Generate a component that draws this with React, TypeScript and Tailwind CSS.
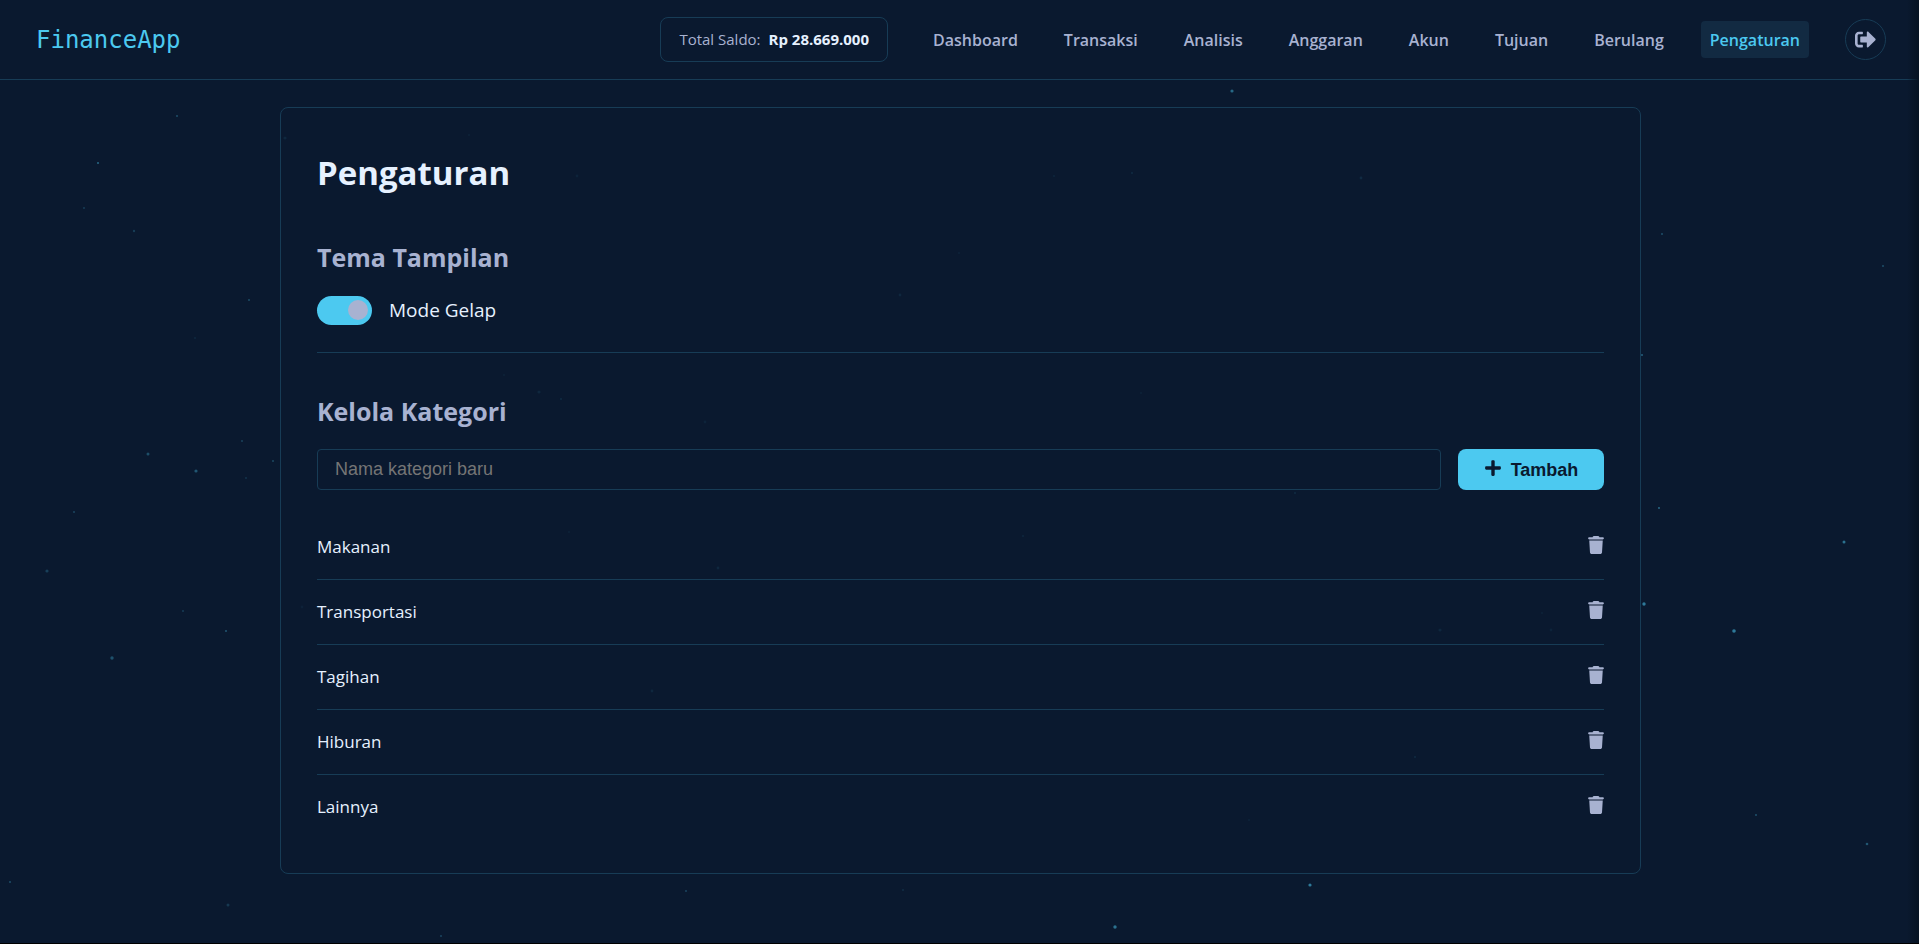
import React, { useState } from "react";
import { FaTrash } from "react-icons/fa6";
import { FaPlus, FaSignOutAlt } from "react-icons/fa";

const LINKS = ["Dashboard", "Transaksi", "Analisis", "Anggaran", "Akun", "Tujuan", "Berulang", "Pengaturan"];
const CATEGORIES = ["Makanan", "Transportasi", "Tagihan", "Hiburan", "Lainnya"];

// x, y, radius, opacity
const STARS: [number, number, number, number][] = [
  [177, 116, 1, 0.3], [98, 163, 1, 0.45], [84, 208, 0.8, 0.35], [134, 231, 1.2, 0.2], [249, 300, 0.8, 0.5],
  [242, 441, 0.8, 0.4], [273, 461, 0.8, 0.45], [148, 454, 1.5, 0.3], [196, 471, 1.6, 0.35], [246, 478, 0.7, 0.3],
  [74, 512, 1, 0.25], [47, 571, 1.6, 0.22], [183, 611, 0.8, 0.35], [226, 631, 1, 0.35], [112, 658, 1.7, 0.32],
  [10, 882, 1, 0.3], [228, 905, 1.5, 0.18], [195, 338, 0.8, 0.15], [1232, 91, 1.6, 0.45], [1662, 234, 1, 0.3],
  [1883, 266, 1, 0.3], [1642, 355, 1, 0.4], [1659, 508, 0.9, 0.5], [1844, 542, 1.5, 0.5], [1644, 604, 1.7, 0.55],
  [1734, 631, 1.8, 0.55], [1756, 815, 0.9, 0.35], [1867, 844, 1.3, 0.35], [1310, 885, 1.6, 0.55], [1115, 927, 1.7, 0.5],
  [686, 891, 1, 0.25], [903, 890, 1, 0.12], [441, 936, 1, 0.25],
  [285, 138, 1.6, 0.08], [469, 135, 1, 0.06], [577, 176, 1.4, 0.06], [1361, 178, 1.4, 0.1], [504, 375, 1, 0.06],
  [539, 392, 1.6, 0.08], [561, 399, 1.2, 0.08], [1440, 630, 1.6, 0.08], [1542, 613, 1, 0.06], [1551, 630, 1.4, 0.06],
  [652, 691, 1.4, 0.08], [302, 607, 1.4, 0.05], [569, 532, 1, 0.06], [1054, 176, 1.2, 0.06], [1132, 173, 1.2, 0.08],
  [959, 253, 1.2, 0.05], [900, 295, 1.4, 0.08], [1141, 393, 1, 0.06], [705, 422, 1.4, 0.06], [1023, 536, 1, 0.08],
  [718, 568, 1.4, 0.08], [1295, 493, 1.2, 0.08], [1415, 757, 1.2, 0.08], [1249, 820, 1.2, 0.05],
];

export default function App() {
  const [dark, setDark] = useState(true);
  return (
    <div className="relative isolate flex min-h-screen flex-col border-b border-black bg-[#0a192f] font-['Open_Sans','Noto_Sans',sans-serif] text-[#e6f1ff]">
      <svg aria-hidden="true" className="pointer-events-none absolute inset-0 -z-10 h-full w-full" fill="#4cc9f0">
        {STARS.map(([x, y, r, o]) => (
          <circle key={`${x}-${y}`} cx={x} cy={y} r={r} opacity={o} />
        ))}
      </svg>
      <div aria-hidden="true" className="pointer-events-none absolute inset-y-0 right-0 w-3 bg-linear-to-r from-transparent to-[#061322]" />

      <header className="flex h-20 items-center justify-between border-b border-[#173c56] pr-[33px] pl-9">
        <a href="#" className="font-['DejaVu_Sans_Mono',monospace] text-2xl text-[#4cc9f0]">FinanceApp</a>
        <div className="flex items-center gap-9">
          <div className="flex h-[45px] items-center gap-2 rounded-lg border border-[#173c56] px-[18px] text-[15px]">
            <span className="text-[#a8b2d1]">Total Saldo:</span>
            <strong className="font-bold">Rp 28.669.000</strong>
          </div>
          <nav className="flex items-center gap-7">
            {LINKS.map((label) => (
              <a
                key={label}
                href="#"
                className={
                  label === "Pengaturan"
                    ? "flex h-[37px] items-center rounded bg-[#122a42] px-[9px] font-semibold text-[#4cc9f0]"
                    : "flex h-[37px] items-center rounded px-[9px] font-semibold text-[#a8b2d1]"
                }
              >
                {label}
              </a>
            ))}
          </nav>
          <button type="button" aria-label="Keluar" className="flex size-[41px] items-center justify-center rounded-full border border-[#173c56] text-[#a8b2d1]">
            <FaSignOutAlt size={21} />
          </button>
        </div>
      </header>

      <div className="pt-[27px] pl-0.5">
        <main className="mx-auto w-full max-w-[1361px] rounded-lg border border-[#173c56] px-9 pt-10 pb-[34px]">
          <h1 className="text-[33px] leading-[50px] font-bold">Pengaturan</h1>

          <section className="mt-[37px] border-b border-[#173c56] pb-7">
            <h2 className="text-[25px] leading-[44px] font-bold text-[#a8b2d1]">Tema Tampilan</h2>
            <label className="mt-[17px] flex h-7 cursor-pointer items-center gap-[17px] text-[19px]">
              <span className="relative flex h-[29px] w-[55px] items-center">
                <input
                  type="checkbox"
                  checked={dark}
                  onChange={(e) => setDark(e.target.checked)}
                  className="peer h-full w-full cursor-pointer appearance-none rounded-full bg-[#173c56] checked:bg-[#4cc9f0]"
                />
                <span className="pointer-events-none absolute left-1 size-5 rounded-full bg-[#a8b2d1] peer-checked:left-[31px]" />
              </span>
              Mode Gelap
            </label>
          </section>

          <section className="mt-9">
            <h2 className="text-[25px] leading-[44px] font-bold text-[#a8b2d1]">Kelola Kategori</h2>
            <form className="mt-4 flex gap-[17px]" onSubmit={(e) => e.preventDefault()}>
              <input
                type="text"
                aria-label="Nama kategori baru"
                placeholder="Nama kategori baru"
                className="h-[41px] min-w-0 flex-1 rounded border border-[#173c56] bg-transparent px-[17px] font-['Liberation_Sans',sans-serif] text-lg placeholder:text-[#757575]"
              />
              <button type="submit" className="flex h-[41px] w-[146px] items-center justify-center gap-[9px] rounded-lg bg-[#4cc9f0] font-['Liberation_Sans',sans-serif] text-lg font-bold text-[#0a192f]">
                <FaPlus size={18} className="mb-1" />
                Tambah
              </button>
            </form>
            <ul className="mt-[25px]">
              {CATEGORIES.map((name) => (
                <li key={name} className="flex h-[65px] items-center justify-between border-b border-[#173c56] text-[17px] last:h-16 last:border-b-0">
                  {name}
                  <button type="button" aria-label={`Hapus ${name}`} className="pb-1 text-[#a8b2d1]">
                    <FaTrash className="h-[18px] w-4" />
                  </button>
                </li>
              ))}
            </ul>
          </section>
        </main>
      </div>
    </div>
  );
}
